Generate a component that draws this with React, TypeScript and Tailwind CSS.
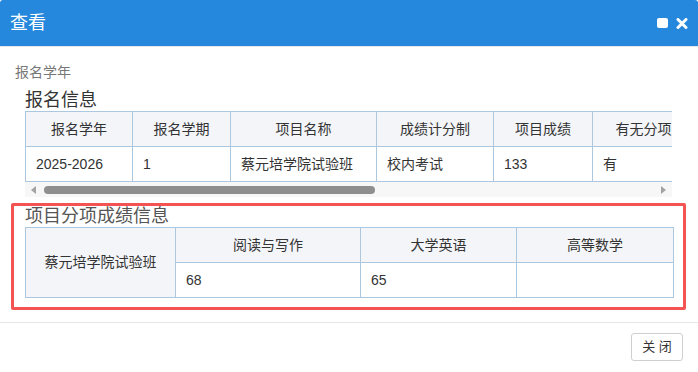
import React from "react";

const enrollHeaders = [
  { label: "报名学年", w: "w-[107px]" },
  { label: "报名学期", w: "w-[98px]" },
  { label: "项目名称", w: "w-[146px]" },
  { label: "成绩计分制", w: "w-[117px]" },
  { label: "项目成绩", w: "w-[99px]" },
  { label: "有无分项成绩", w: "w-[130px]" },
  { label: "审核状态", w: "w-[110px]" },
  { label: "报名时间", w: "w-[170px]" },
  { label: "备注", w: "w-[233px]" },
];

const enrollRow = ["2025-2026", "1", "蔡元培学院试验班", "校内考试", "133", "有", "已审核", "2025-09-01 10:20", ""];

const subjects = [
  { name: "阅读与写作", score: "68", w: "w-[185px]" },
  { name: "大学英语", score: "65", w: "w-[156px]" },
  { name: "高等数学", score: "", w: "w-[157px]" },
];

export default function App() {
  return (
    <div className="w-[698px] h-[372px] bg-white overflow-hidden text-[#333] font-['Liberation_Sans','Noto_Sans_CJK_SC',sans-serif]">
      <div className="h-[46px] bg-[#2688dc] flex items-center justify-between pl-[10px] pr-[10px] rounded-t-[3px]">
        <span className="text-white text-[18px] leading-[24px]">查看</span>
        <div className="flex items-center gap-[8px]">
          <span className="w-[11px] h-[10px] bg-white rounded-[2px]" />
          <svg width="12" height="11" viewBox="0 0 12 11">
            <path d="M2 1.5 L10 9.5 M10 1.5 L2 9.5" stroke="white" strokeWidth="3" strokeLinecap="round" />
          </svg>
        </div>
      </div>
      <div className="h-px bg-[#e6e6e6]" />

      <div className="h-[275px] px-[11px] pt-[15px]">
        <div className="pl-[4px] text-[14px] leading-[20px] text-[#777]">报名学年</div>

        <div className="pl-[14px] pt-[7px] w-[661px]">
          <div className="text-[18px] leading-[22px] text-[#333]">报名信息</div>
          <div className="w-[647px] overflow-hidden">
            <table className="border-collapse text-[14px] table-fixed w-[1210px]">
              <thead>
                <tr className="bg-[#f3f5f9]">
                  {enrollHeaders.map((h) => (
                    <th key={h.label} className={`${h.w} h-[35px] border border-[#abc8e0] font-normal text-center whitespace-nowrap`}>
                      {h.label}
                    </th>
                  ))}
                </tr>
              </thead>
              <tbody>
                <tr>
                  {enrollRow.map((v, i) => (
                    <td key={i} className="h-[35px] border border-[#abc8e0] px-[10px] text-left whitespace-nowrap">
                      {v}
                    </td>
                  ))}
                </tr>
              </tbody>
            </table>
          </div>
          <div className="w-[647px] h-[15px] bg-[#f7f7f7] flex items-center px-[6px] gap-[8px]">
            <svg width="5" height="8" viewBox="0 0 5 8">
              <path d="M5 0 L0 4 L5 8 Z" fill="#a3a3a3" />
            </svg>
            <div className="flex-1 flex items-center">
              <div className="w-[331px] h-[8px] rounded-full bg-[#8e8e8e]" />
            </div>
            <svg width="5" height="8" viewBox="0 0 5 8">
              <path d="M0 0 L5 4 L0 8 Z" fill="#a3a3a3" />
            </svg>
          </div>
        </div>

        <div className="mt-[6px] w-[675px] border-[3px] border-[#f45353] pl-[11px] pb-[9px] rounded-[2px]">
          <div className="text-[18px] leading-[21px] text-[#555]">项目分项成绩信息</div>
          <table className="border-collapse text-[14px] table-fixed w-[648px]">
            <tbody>
              <tr>
                <td rowSpan={2} className="w-[150px] border border-[#abc8e0] bg-[#f3f5f9] text-center">
                  蔡元培学院试验班
                </td>
                {subjects.map((s) => (
                  <td key={s.name} className={`${s.w} h-[35px] border border-[#abc8e0] bg-[#f3f5f9] text-center`}>
                    {s.name}
                  </td>
                ))}
              </tr>
              <tr>
                {subjects.map((s) => (
                  <td key={s.name} className="h-[35px] border border-[#abc8e0] px-[10px]">
                    {s.score}
                  </td>
                ))}
              </tr>
            </tbody>
          </table>
        </div>
      </div>

      <div className="h-px bg-[#e6e6e6]" />
      <div className="flex justify-end pt-[10px] pr-[15px]">
        <button className="w-[52px] h-[28px] border border-[#cfcfcf] rounded-[3px] bg-white text-[13px] text-[#333]">
          关 闭
        </button>
      </div>
    </div>
  );
}
